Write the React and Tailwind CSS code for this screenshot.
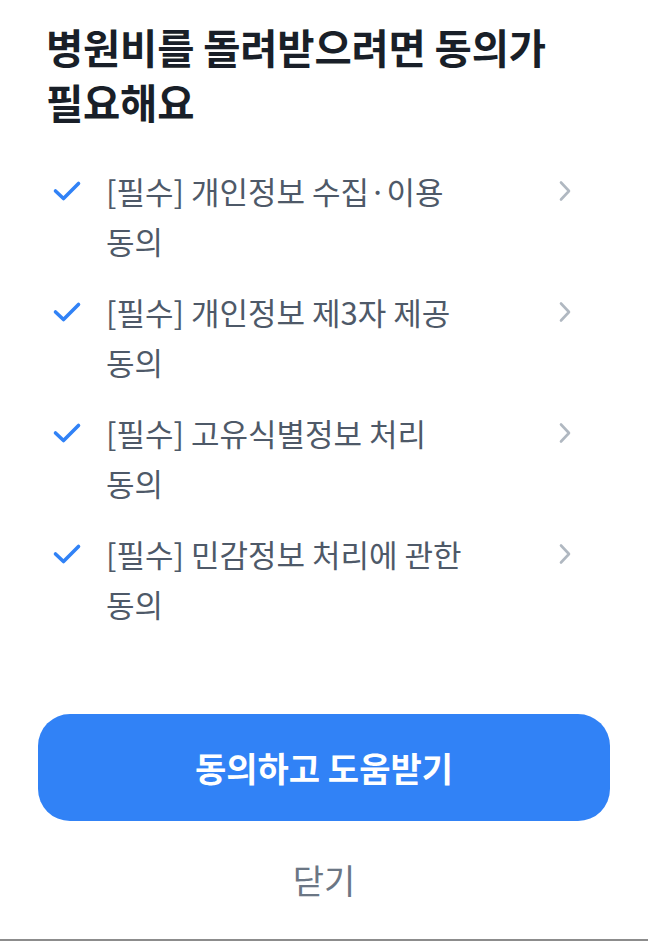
import React from "react";

// 동의 항목 목록
const items = [
  ["[필수] 개인정보 수집·이용", "동의"],
  ["[필수] 개인정보 제3자 제공", "동의"],
  ["[필수] 고유식별정보 처리", "동의"],
  ["[필수] 민감정보 처리에 관한", "동의"],
];

function CheckIcon() {
  return (
    <svg width="30" height="22" viewBox="0 0 30 22" fill="none">
      <path d="M3.5 11 L11.5 18.5 L26.5 3.5" stroke="#3182f6" strokeWidth="3.6" strokeLinecap="round" strokeLinejoin="round" />
    </svg>
  );
}

function ChevronIcon() {
  return (
    <svg width="14" height="22" viewBox="0 0 14 22" fill="none">
      <path d="M3 2.5 L11 11 L3 19.5" stroke="#b0b8c1" strokeWidth="2.6" strokeLinecap="round" strokeLinejoin="round" />
    </svg>
  );
}

function App() {
  return (
    <div className="w-[648px] h-[941px] bg-white flex flex-col border-b-2 border-[#8c8c8c] font-['Noto_Sans_CJK_KR','Noto_Sans',sans-serif] overflow-hidden">
      <h1 className="pt-[19px] pl-[46px] text-[40.5px] leading-[55px] font-bold text-[#191f28] tracking-[-0.2px]">
        병원비를 돌려받으려면 동의가
        <br />
        필요해요
      </h1>

      <ul className="mt-[37px] flex flex-col gap-[21px]">
        {items.map((item, index) => (
          <li key={index} className="flex items-start pl-[52px] pr-[76px]">
            <div className="h-[50px] flex items-center">
              <CheckIcon />
            </div>
            <div className="ml-[24px] flex-1 text-[31px] leading-[50px] text-[#4e5968]">
              {item[0]}
              <br />
              {item[1]}
            </div>
            <div className="h-[50px] flex items-center">
              <ChevronIcon />
            </div>
          </li>
        ))}
      </ul>

      <div className="mt-auto px-[38px]">
        <button className="w-full h-[107px] rounded-[32px] bg-[#3182f6] text-white text-[34px] font-semibold">
          동의하고 도움받기
        </button>
      </div>
      <div className="h-[118px] flex items-center justify-center text-[34px] text-[#6b7684] pb-[2px]">
        닫기
      </div>
    </div>
  );
}

export default App;
